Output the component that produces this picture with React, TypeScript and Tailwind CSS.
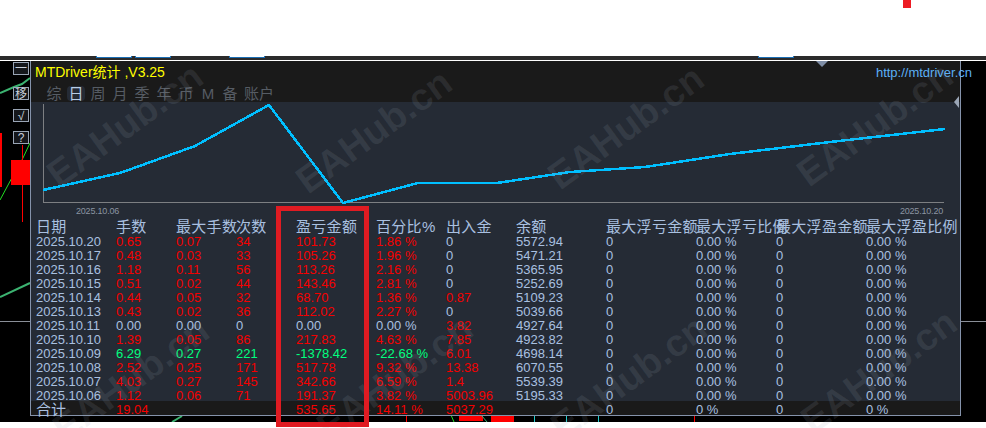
const sans = 'font-["Liberation_Sans","Noto_Sans_CJK_SC",sans-serif]';

type Tone = 'red' | 'green' | 'blue';

const toneClass: Record<Tone, string> = {
  red: 'text-[#f40000]',
  green: 'text-[#00ff7f]',
  blue: 'text-[#a9c0e0]',
};

const headers = ['日期', '手数', '最大手数', '次数', '盈亏金额', '百分比%', '出入金', '余额', '最大浮亏金额', '最大浮亏比例', '最大浮盈金额', '最大浮盈比例'];

const rows: { date: string; lots: string; max: string; count: string; profit: string; pct: string; flow: string; balance: string; tone: Tone }[] = [
  { date: '2025.10.20', lots: '0.65', max: '0.07', count: '34', profit: '101.73', pct: '1.86 %', flow: '0', balance: '5572.94', tone: 'red' },
  { date: '2025.10.17', lots: '0.48', max: '0.03', count: '33', profit: '105.26', pct: '1.96 %', flow: '0', balance: '5471.21', tone: 'red' },
  { date: '2025.10.16', lots: '1.18', max: '0.11', count: '56', profit: '113.26', pct: '2.16 %', flow: '0', balance: '5365.95', tone: 'red' },
  { date: '2025.10.15', lots: '0.51', max: '0.02', count: '44', profit: '143.46', pct: '2.81 %', flow: '0', balance: '5252.69', tone: 'red' },
  { date: '2025.10.14', lots: '0.44', max: '0.05', count: '32', profit: '68.70', pct: '1.36 %', flow: '0.87', balance: '5109.23', tone: 'red' },
  { date: '2025.10.13', lots: '0.43', max: '0.02', count: '36', profit: '112.02', pct: '2.27 %', flow: '0', balance: '5039.66', tone: 'red' },
  { date: '2025.10.11', lots: '0.00', max: '0.00', count: '0', profit: '0.00', pct: '0.00 %', flow: '3.82', balance: '4927.64', tone: 'blue' },
  { date: '2025.10.10', lots: '1.39', max: '0.05', count: '86', profit: '217.83', pct: '4.63 %', flow: '7.85', balance: '4923.82', tone: 'red' },
  { date: '2025.10.09', lots: '6.29', max: '0.27', count: '221', profit: '-1378.42', pct: '-22.68 %', flow: '6.01', balance: '4698.14', tone: 'green' },
  { date: '2025.10.08', lots: '2.52', max: '0.25', count: '171', profit: '517.78', pct: '9.32 %', flow: '13.38', balance: '6070.55', tone: 'red' },
  { date: '2025.10.07', lots: '4.03', max: '0.27', count: '145', profit: '342.66', pct: '6.59 %', flow: '1.4', balance: '5539.39', tone: 'red' },
  { date: '2025.10.06', lots: '1.12', max: '0.06', count: '71', profit: '191.37', pct: '3.82 %', flow: '5003.96', balance: '5195.33', tone: 'red' },
];

const tabs = ['综', '日', '周', '月', '季', '年', '币', 'M', '备'];

const gridCols = 'grid grid-cols-[80px_60px_60px_60px_80px_70px_70px_90px_90px_80px_90px_90px]';

function Cell({ children, className = '' }: { children?: React.ReactNode; className?: string }) {
  return <div className={`min-w-0 whitespace-nowrap ${className}`}>{children}</div>;
}

function Watermarks() {
  const cls = `absolute font-bold text-[38px] leading-none -rotate-[36deg] text-[#a4adba]/[0.13] ${sans}`;
  return (
    <div className="pointer-events-none absolute inset-0 z-20 overflow-hidden">
      <span className={`${cls} left-[34px] top-[106px]`}>EAHub.cn</span>
      <span className={`${cls} left-[283px] top-[112px]`}>EAHub.cn</span>
      <span className={`${cls} left-[535px] top-[108px]`}>EAHub.cn</span>
      <span className={`${cls} left-[784px] top-[105px]`}>EAHub.cn</span>
      <span className={`${cls} left-[40px] top-[360px]`}>EAHub.cn</span>
      <span className={`${cls} left-[304px] top-[358px]`}>EAHub.cn</span>
      <span className={`${cls} left-[538px] top-[358px]`}>EAHub.cn</span>
      <span className={`${cls} left-[788px] top-[352px]`}>EAHub.cn</span>
    </div>
  );
}

function BackdropChart() {
  return (
    <svg className="absolute inset-0 h-[361px] w-[986px]" viewBox="0 61 986 361">
      <polyline points="0,93 14,87 22,84 30,78" fill="none" stroke="#3cb371" strokeWidth="2" />
      <polyline points="0,200 15,172 22,160 30,143" fill="none" stroke="#22dd22" strokeWidth="1" />
      <polyline points="0,297 30,283" fill="none" stroke="#3cb371" strokeWidth="2" />
      <rect x="0" y="133" width="2" height="54" fill="#ff0000" />
      <rect x="22" y="145" width="1" height="77" fill="#ff0000" />
      <rect x="11" y="160" width="19" height="25" fill="#ff0000" />
      <rect x="0" y="321" width="30" height="1" fill="#8a8f98" />
      <rect x="961" y="321" width="25" height="1" fill="#8a8f98" />
      <polyline points="172,422 182,416" fill="none" stroke="#3cb371" strokeWidth="2" />
      <rect x="406" y="415" width="1" height="7" fill="#ff0000" />
      <polyline points="451,415 454,422" fill="none" stroke="#22dd22" strokeWidth="1" />
      <rect x="459" y="416" width="24" height="5" fill="#ff0000" />
      <polyline points="482,416 487,422" fill="none" stroke="#3cb371" strokeWidth="1" />
      <rect x="491" y="415" width="23" height="7" fill="#ff0000" />
      <rect x="534" y="415" width="1" height="7" fill="#22cccc" />
      <rect x="566" y="415" width="1" height="7" fill="#22cccc" />
      <rect x="598" y="415" width="1" height="7" fill="#22cccc" />
      <rect x="694" y="415" width="1" height="7" fill="#ff0000" />
    </svg>
  );
}

function EquityChart() {
  return (
    <svg className="block h-[103px] w-[929px]" viewBox="31 102 929 103" shapeRendering="crispEdges">
      <polyline points="43,104 43,202 944,202" fill="none" stroke="#7d7f82" strokeWidth="1" />
      <polyline
        points="43,190 120,173 195,146 269,105 343,203 418,183 497,183 570,172 645,167 730,154 830,142 945,129"
        fill="none"
        stroke="#00bfff"
        strokeWidth="2.5"
      />
    </svg>
  );
}

function SideButton({ label, className = '' }: { label: string; className?: string }) {
  return (
    <button className={`flex h-[13px] w-4 items-center justify-center border border-[#9aa5b5] bg-[#15171b] text-[12px] leading-none text-[#c9d0da] ${sans} ${className}`}>
      {label}
    </button>
  );
}

export default function App() {
  return (
    <div className={`relative h-[428px] w-[986px] overflow-hidden bg-white ${sans}`}>
      <div className="relative h-14">
        <div className="absolute left-[903px] top-0 h-2 w-2 bg-[#ed1c24]" />
      </div>

      <div className="flex h-[4px] items-start bg-[#2b2b2b]">
        <div className="ml-[96px] h-[2px] w-9 border-x border-b border-[#1b6fb5] bg-white" />
        <div className="ml-[3px] h-[2px] w-9 border-x border-b border-[#1b6fb5] bg-white" />
        <div className="ml-[58px] h-[2px] w-9 border-x border-b border-[#1b6fb5] bg-white" />
        <div className="ml-[493px] h-[2px] w-9 border-x border-b border-[#1b6fb5] bg-white" />
      </div>
      <div className="h-px bg-white" />

      <div className="relative flex h-[361px] bg-black pb-[6px]">
        <BackdropChart />

        <div className="relative flex w-[30px] flex-col gap-[9px] pl-[13px] pt-px">
          <SideButton label="一" className="mb-[3px]" />
          <SideButton label="移" />
          <SideButton label="√" />
          <SideButton label="?" />
        </div>

        <div className="relative flex h-[355px] w-[931px] flex-col border-x border-b border-[#8593ab]">
          {/* caption and period tabs */}
          <div className="h-[41px] bg-[#1a1a1a]">
            <div className="flex h-[22px] items-center justify-between pl-1">
              <span className="text-[14px] leading-none text-[#ffff00]">MTDriver统计 ,V3.25</span>
              <span className="-mr-3 text-[13px] leading-none text-[#5cb0f5]">http://mtdriver.cn</span>
            </div>
            <div className="flex h-[19px] items-center pl-[12px] pt-px text-[15px] leading-none text-[#565c64]">
              {tabs.map((tab) => (
                <span
                  key={tab}
                  className={`mx-[2px] flex h-[15px] w-[18px] items-center justify-center rounded-sm ${tab === '日' ? 'bg-[#252b35] text-[#b8cde6]' : ''}`}
                >
                  {tab}
                </span>
              ))}
              <span className="ml-[3px] flex h-[15px] items-center">账户</span>
            </div>
          </div>

          <div className="flex flex-1 flex-col bg-[#252b35] pl-[5px]">
            <div className="-ml-[5px]">
              <EquityChart />
            </div>
            <div className="flex h-[14px] justify-between pl-[40px] pr-[17px] text-[9px] leading-[8px] tracking-[-0.2px] text-[#8a94a1]">
              <span className="pt-[2px]">2025.10.06</span>
              <span className="pt-[2px]">2025.10.20</span>
            </div>

            <div className={`${gridCols} h-[15px] items-center text-[15px] leading-none tracking-[0.3px] text-[#a9c0e0]`}>
              {headers.map((h) => (
                <Cell key={h}>{h}</Cell>
              ))}
            </div>

            <div className="text-[13px] leading-[16px]">
              {rows.map((r) => (
                <div key={r.date} className={`${gridCols} h-[14px] text-[#a9c0e0]`}>
                  <Cell>{r.date}</Cell>
                  <Cell className={toneClass[r.tone]}>{r.lots}</Cell>
                  <Cell className={toneClass[r.tone]}>{r.max}</Cell>
                  <Cell className={toneClass[r.tone]}>{r.count}</Cell>
                  <Cell className={toneClass[r.tone]}>{r.profit}</Cell>
                  <Cell className={toneClass[r.tone]}>{r.pct}</Cell>
                  <Cell className={r.flow === '0' ? toneClass.blue : toneClass.red}>{r.flow}</Cell>
                  <Cell>{r.balance}</Cell>
                  <Cell>0</Cell>
                  <Cell>0.00 %</Cell>
                  <Cell>0</Cell>
                  <Cell>0.00 %</Cell>
                </div>
              ))}
            </div>

            {/* totals */}
            <div className={`${gridCols} -ml-[5px] -mt-px h-[14px] bg-[#1a1a1a] pl-[5px] text-[13px] leading-[18px] text-[#a9c0e0]`}>
              <Cell className="text-[15px]">合计</Cell>
              <Cell className={toneClass.red}>19.04</Cell>
              <Cell />
              <Cell />
              <Cell className={toneClass.red}>535.65</Cell>
              <Cell className={toneClass.red}>14.11 %</Cell>
              <Cell className={toneClass.red}>5037.29</Cell>
              <Cell />
              <Cell>0</Cell>
              <Cell>0 %</Cell>
              <Cell>0</Cell>
              <Cell>0 %</Cell>
            </div>
          </div>

          {/* little markers on the window edge */}
          <div className="absolute left-[785px] top-0 h-0 w-0 border-x-[6px] border-t-[6px] border-x-transparent border-t-[#7f8ea6]" />
          <div className="absolute left-[923px] top-[35px] h-0 w-0 border-y-[6px] border-r-[5px] border-y-transparent border-r-[#9aa5b5]" />
        </div>
      </div>

      <Watermarks />

      {/* red highlight around the profit column */}
      <div className="absolute left-[276px] top-[206px] z-30 h-[221px] w-[93px] border-[5px] border-[#e01b22]" />
    </div>
  );
}
